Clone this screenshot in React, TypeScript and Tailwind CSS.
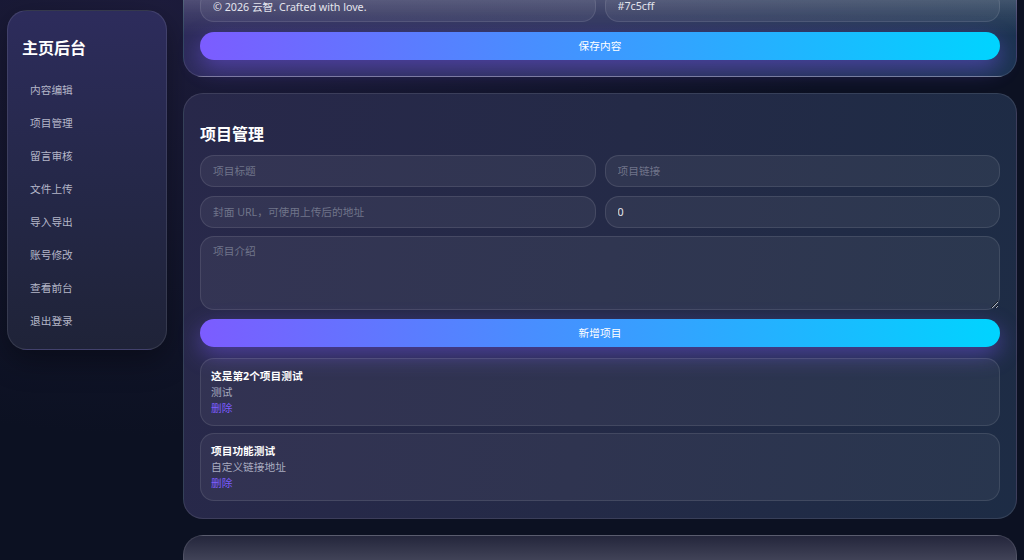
import React from 'react'

const navItems = ['内容编辑', '项目管理', '留言审核', '文件上传', '导入导出', '账号修改', '查看前台', '退出登录']

const projects = [
  { title: '这是第2个项目测试', desc: '测试' },
  { title: '项目功能测试', desc: '自定义链接地址' },
]

const field =
  'h-8 w-full rounded-[14px] border border-white/10 bg-white/[0.06] px-3 text-[10.7px] text-[#e4e5ee] placeholder:text-[#70748a] outline-none'

const gradientBtn =
  'h-7 w-full rounded-full bg-[linear-gradient(90deg,#7c5cff,#00d4ff)] text-[10.7px] text-white shadow-[0_8px_22px_rgba(124,92,255,0.45)]'

function Sidebar() {
  return (
    <aside className="mt-[10px] w-[160px] shrink-0 self-start rounded-[20px] border border-white/10 bg-gradient-to-b from-[#2d2c5c] via-[#252849] to-[#1f2338] px-[14px] pt-[26px] pb-[11px] shadow-[0_10px_30px_rgba(0,0,0,0.35)]">
      <h2 className="text-[16px] leading-[22px] font-bold text-white">主页后台</h2>
      <nav className="mt-[15px] flex flex-col">
        {navItems.map((n) => (
          <a key={n} href="#" className="flex h-[33px] items-center px-[8px] text-[10.7px] text-[#b4b6c8]">
            {n}
          </a>
        ))}
      </nav>
    </aside>
  )
}

export default function App() {
  return (
    <div
      lang="zh-CN"
      className="h-[560px] overflow-hidden bg-[#0c1122] bg-[radial-gradient(ellipse_at_15%_0%,#1d1c3c_0%,rgba(12,17,34,0)_55%)]"
      style={{ fontFamily: '"Noto Sans", "Noto Sans CJK SC", sans-serif' }}
    >
      <div className="flex gap-4 px-[7px]">
        <Sidebar />

        <main className="mt-[-27px] flex flex-1 flex-col gap-4">
          {/* site settings card, scrolled mostly out of view */}
          <section className="rounded-[20px] border border-white/10 bg-[linear-gradient(180deg,rgba(255,255,255,0.32)_0px,rgba(255,255,255,0.08)_40px,rgba(255,255,255,0)_62px),linear-gradient(100deg,#2d2b5a_0%,#2a3058_50%,#1b3350_100%)] px-4 pt-4 pb-4">
            <div className="grid grid-cols-2 gap-[9px]">
              <input className={field} defaultValue="© 2026 云智. Crafted with love." />
              <input className={field} defaultValue="#7c5cff" />
            </div>
            <button className={`${gradientBtn} mt-[10px]`}>保存内容</button>
          </section>

          {/* projects */}
          <section className="rounded-[20px] border border-white/10 bg-[linear-gradient(100deg,#28284a_0%,#242a47_50%,#1d2c45_100%)] px-4 pt-[28px] pb-[17px]">
            <h2 className="text-[16px] leading-6 font-bold text-white">项目管理</h2>
            <div className="mt-[9px] grid grid-cols-2 gap-x-[9px] gap-y-[9px]">
              <input className={field} placeholder="项目标题" />
              <input className={field} placeholder="项目链接" />
              <input className={field} placeholder="封面 URL，可使用上传后的地址" />
              <input className={field} defaultValue="0" />
            </div>
            <textarea
              className="mt-[8px] block h-[74px] w-full rounded-[14px] border border-white/10 bg-white/[0.06] px-3 py-[6px] text-[10.7px] text-[#e4e5ee] placeholder:text-[#70748a] outline-none"
              placeholder="项目介绍"
            />
            <button className={`${gradientBtn} mt-[9px]`}>新增项目</button>

            <div className="mt-[11px] flex flex-col gap-[7px]">
              {projects.map((p) => (
                <div key={p.title} className="rounded-[14px] border border-white/10 bg-white/[0.05] px-[10px] py-[9px] text-[10.7px] leading-4">
                  <div className="font-bold text-white">{p.title}</div>
                  <div className="text-[#a9acc0]">{p.desc}</div>
                  <a href="#" className="text-[#7c5cff]">删除</a>
                </div>
              ))}
            </div>
          </section>

          {/* next card, just entering view */}
          <section className="h-[120px] rounded-[20px] border border-white/10 bg-[linear-gradient(180deg,#24263c_0px,#484a5e_30px)]" />
        </main>
      </div>
    </div>
  )
}
